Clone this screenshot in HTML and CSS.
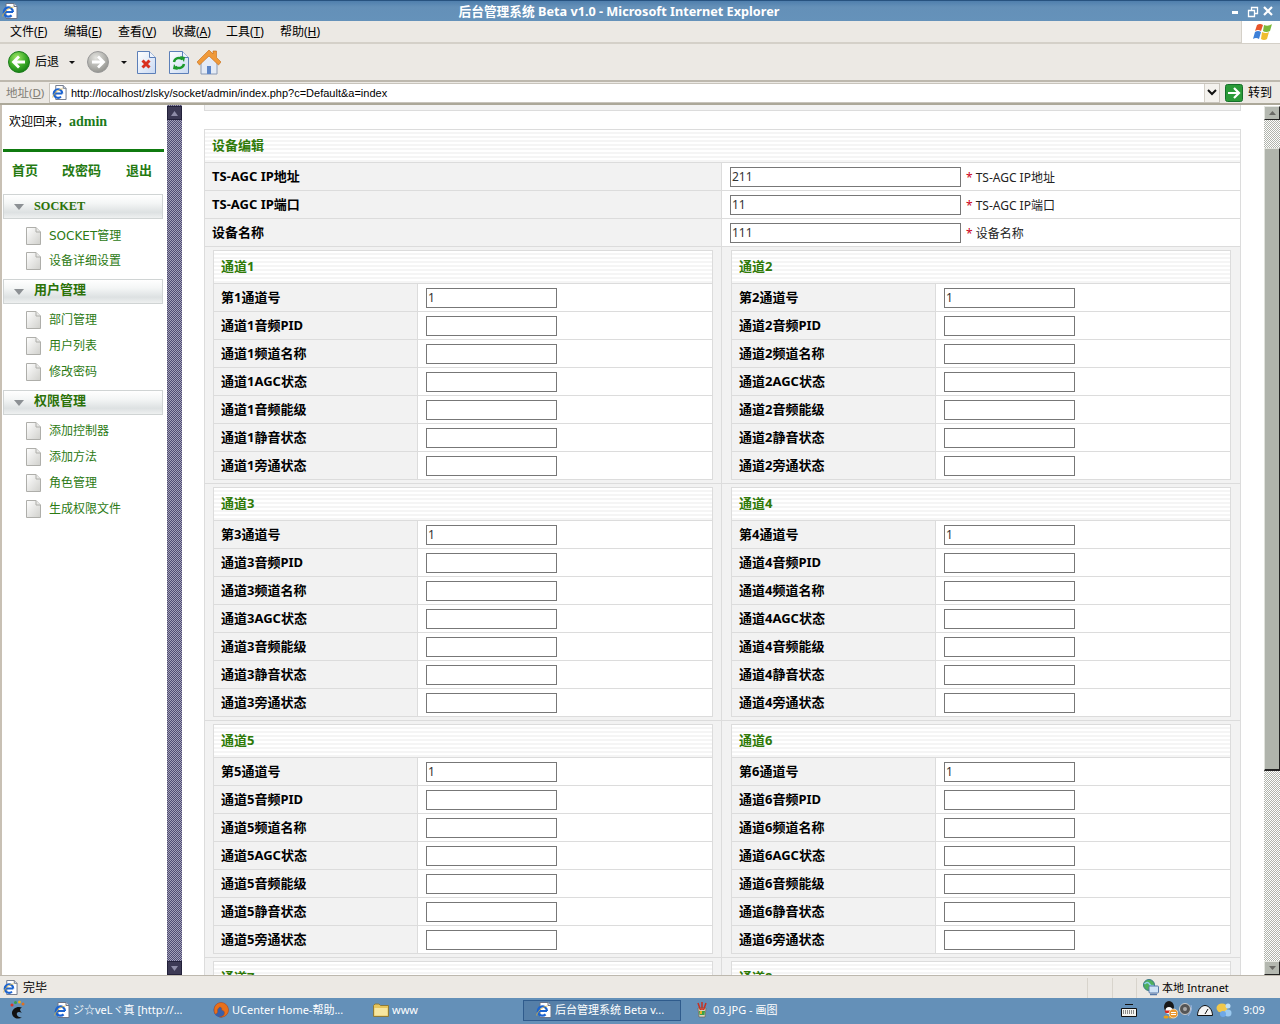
FILE: index.html
```html
<!DOCTYPE html>
<html lang="zh">
<head>
<meta charset="utf-8">
<title>后台管理系统 Beta v1.0 - Microsoft Internet Explorer</title>
<link rel="stylesheet" href="styles.css">
</head>
<body>
<svg class="defs" aria-hidden="true">
  <defs>
    <radialGradient id="gGreen" cx="40%" cy="30%" r="75%"><stop offset="0" stop-color="#a6e86a"/><stop offset=".55" stop-color="#3fae2a"/><stop offset="1" stop-color="#127a12"/></radialGradient>
    <radialGradient id="gGray" cx="40%" cy="30%" r="75%"><stop offset="0" stop-color="#e4e4e0"/><stop offset="1" stop-color="#8f8f8a"/></radialGradient>
    <linearGradient id="gPage" x1="0" y1="0" x2="1" y2="1"><stop offset="0" stop-color="#fff"/><stop offset="1" stop-color="#c9d9f2"/></linearGradient>
    <linearGradient id="gDoc" x1="0" y1="0" x2="1" y2="1"><stop offset="0" stop-color="#fff"/><stop offset="1" stop-color="#d0d0cc"/></linearGradient>
    <symbol id="ie" viewBox="0 0 16 16">
      <path d="M4 .5h8l3 3v12H4z" fill="#fff" stroke="#6b7488" stroke-width="1"/>
      <path d="M12 .5v3h3" fill="#dfe5ee" stroke="#6b7488" stroke-width="1"/>
      <path d="M2.5 9h8.5M11 9a4.6 4.6 0 1 0-1.4 3.4" fill="none" stroke="#1c64d0" stroke-width="2.2"/>
      <path d="M.8 13.5C.2 11 6 4.5 11.5 4" fill="none" stroke="#e8b93a" stroke-width=".8"/>
    </symbol>
    <symbol id="doc" viewBox="0 0 15 18">
      <path d="M.5.5h9.5l4.5 4.5v12.5H.5z" fill="url(#gDoc)" stroke="#aeaeaa"/>
      <path d="M10 .5V5h4.5" fill="#e8e8e6" stroke="#aeaeaa"/>
    </symbol>
    <symbol id="folder" viewBox="0 0 16 14">
      <path d="M.5 2.5 2 1h4l1.5 1.5h8v11H.5z" fill="#e8c65c" stroke="#8d7a3a"/>
      <path d="M1.5 5h13v7.5h-13z" fill="#f7e6a0"/>
    </symbol>
  </defs>
</svg>
<div class="window">
  <header class="titlebar">
    <svg class="title-icon"><use href="#ie"/></svg>
    <div class="title-text">后台管理系统 Beta v1.0 - Microsoft Internet Explorer</div>
    <div class="title-btns">
      <svg width="48" height="21" viewBox="0 0 48 21"><path d="M0 10h6v3H0z" fill="#fff"/><path d="M16.5 9.5h6v6h-6zM19.5 9.5v-3h6v6h-3" fill="none" stroke="#fff" stroke-width="1.3"/><path d="M32 6l8 8M40 6l-8 8" stroke="#fff" stroke-width="2.2"/></svg>
    </div>
  </header>
  <nav class="menubar">
    <div class="menus">
      <span>文件(<u>F</u>)</span><span>编辑(<u>E</u>)</span><span>查看(<u>V</u>)</span><span>收藏(<u>A</u>)</span><span>工具(<u>T</u>)</span><span>帮助(<u>H</u>)</span>
    </div>
    <div class="flag">
      <svg width="22" height="20" viewBox="0 0 22 20"><path d="M4 3q3-2 6 0l-2 6q-3-2-6 0z" fill="#e8552a"/><path d="M11 3q4 2 8-1l-2 7q-4 2-7 0z" fill="#7cb83a"/><path d="M2 10q3-2 6 0l-2 7q-3-2-6 0z" fill="#3d80d8"/><path d="M9 10q4 2 7 0l-2 7q-3 2-6 0z" fill="#f0bd2e"/></svg>
    </div>
  </nav>
  <div class="toolbar">
    <svg width="22" height="22" viewBox="0 0 22 22"><circle cx="11" cy="11" r="10.5" fill="url(#gGreen)" stroke="#1c7c1c"/><path d="M17 11H6M11 5.500 5.500 11l5.500 5.500" fill="none" stroke="#fff" stroke-width="2.800"/></svg>
    <span class="tb-label">后退</span>
    <i class="caret caret-back"></i>
    <svg class="tb-fwd" width="22" height="22" viewBox="0 0 22 22"><circle cx="11" cy="11" r="10.5" fill="url(#gGray)" stroke="#999"/><path d="M5 11h11M11 5.500l5.500 5.500-5.500 5.500" fill="none" stroke="#fff" stroke-width="2.800"/></svg>
    <i class="caret caret-fwd"></i>
    <svg class="tb-stop" width="19" height="23" viewBox="0 0 19 23"><path d="M.5.5h12l6 6v16H.5z" fill="url(#gPage)" stroke="#5c7fb8"/><path d="M12.5.5v6h6" fill="#eef3fb" stroke="#5c7fb8"/><path d="M5.500 9.500l7 7M12.500 9.500l-7 7" stroke="#d9301f" stroke-width="3"/></svg>
    <svg class="tb-refresh" width="20" height="23" viewBox="0 0 20 23"><path d="M.5.5h13l6 6v16H.5z" fill="url(#gPage)" stroke="#5c7fb8"/><path d="M13.5.5v6h6" fill="#eef3fb" stroke="#5c7fb8"/><path d="M5 11a5 5 0 0 1 8.500-2.500" fill="none" stroke="#1c9a2c" stroke-width="2.400"/><path d="M11 5l5 1-1 5z" fill="#1c9a2c"/><path d="M15 13a5 5 0 0 1-8.500 2.500" fill="none" stroke="#1c9a2c" stroke-width="2.400"/><path d="M9 19l-5-1 1-5z" fill="#1c9a2c"/></svg>
    <svg class="tb-home" width="24" height="25" viewBox="0 0 24 25"><path d="M4 11 12 4l8 7v13H4z" fill="#e4ebf6" stroke="#8a9ab5"/><path d="M10 16h4v8h-4z" fill="#5d86c8"/><path d="M0 12 12 0l4 4V1h3.500v6.500L24 12l-2.500 3L12 6 2.500 15z" fill="#f09a3a" stroke="#c56a16" stroke-width=".6"/></svg>
  </div>
  <div class="addressbar">
    <span class="addr-label">地址(<u>D</u>)</span>
    <div class="addr-field">
      <svg class="addr-icon"><use href="#ie"/></svg>
      <span class="addr-url">http://localhost/zlsky/socket/admin/index.php?c=Default&amp;a=index</span>
      <div class="addr-drop"><svg width="10" height="7" viewBox="0 0 10 7"><path d="M1 1l4 4 4-4" fill="none" stroke="#111" stroke-width="2"/></svg></div>
    </div>
    <svg class="go-icon" width="18" height="18" viewBox="0 0 18 18"><rect x=".5" y=".5" width="17" height="17" rx="2" fill="#2a9a38" stroke="#14702a"/><path d="M3 9h10M9 4l5 5-5 5" fill="none" stroke="#fff" stroke-width="2.2"/></svg>
    <span class="go-label">转到</span>
  </div>

  <div class="content">
    <aside class="sidebar">
      <div class="welcome">欢迎回来，<b>admin</b></div>
      <div class="greenbar"></div>
      <div class="quicknav"><a>首页</a><a>改密码</a><a>退出</a></div>
      <div class="sec-head"><i class="tri"></i><span class="sec-serif">SOCKET</span></div>
      <ul class="links links-first">
        <li><svg class="li-doc"><use href="#doc"/></svg>SOCKET管理</li>
        <li><svg class="li-doc"><use href="#doc"/></svg>设备详细设置</li>
      </ul>
      <div class="sec-head"><i class="tri"></i><span>用户管理</span></div>
      <ul class="links">
        <li><svg class="li-doc"><use href="#doc"/></svg>部门管理</li>
        <li><svg class="li-doc"><use href="#doc"/></svg>用户列表</li>
        <li><svg class="li-doc"><use href="#doc"/></svg>修改密码</li>
      </ul>
      <div class="sec-head"><i class="tri"></i><span>权限管理</span></div>
      <ul class="links">
        <li><svg class="li-doc"><use href="#doc"/></svg>添加控制器</li>
        <li><svg class="li-doc"><use href="#doc"/></svg>添加方法</li>
        <li><svg class="li-doc"><use href="#doc"/></svg>角色管理</li>
        <li><svg class="li-doc"><use href="#doc"/></svg>生成权限文件</li>
      </ul>
    </aside>
    <div class="splitter">
      <div class="split-btn"><svg width="7" height="5" viewBox="0 0 7 5"><path d="M0 5h7L3.500 0z" fill="#8f8da8"/></svg></div>
      <div class="split-btn"><svg width="7" height="5" viewBox="0 0 7 5"><path d="M0 0h7L3.500 5z" fill="#8f8da8"/></svg></div>
    </div>
    <main class="main">
      <div class="strip"></div>
      <section class="form">
        <h2 class="head">设备编辑</h2>
        <div class="frow"><div class="flabel">TS-AGC IP地址</div><div class="fval"><input class="in-wide" type="text" value="211"><span class="star">*</span><span class="hint">TS-AGC IP地址</span></div></div>
        <div class="frow"><div class="flabel">TS-AGC IP端口</div><div class="fval"><input class="in-wide" type="text" value="11"><span class="star">*</span><span class="hint">TS-AGC IP端口</span></div></div>
        <div class="frow"><div class="flabel">设备名称</div><div class="fval"><input class="in-wide" type="text" value="111"><span class="star">*</span><span class="hint">设备名称</span></div></div>

        <div class="pair">
          <div class="pcell">
            <div class="chan"><h3 class="head">通道1</h3>
              <div class="crow"><div class="clabel">第1通道号</div><div class="cval"><input type="text" value="1"></div></div>
              <div class="crow"><div class="clabel">通道1音频PID</div><div class="cval"><input type="text"></div></div>
              <div class="crow"><div class="clabel">通道1频道名称</div><div class="cval"><input type="text"></div></div>
              <div class="crow"><div class="clabel">通道1AGC状态</div><div class="cval"><input type="text"></div></div>
              <div class="crow"><div class="clabel">通道1音频能级</div><div class="cval"><input type="text"></div></div>
              <div class="crow"><div class="clabel">通道1静音状态</div><div class="cval"><input type="text"></div></div>
              <div class="crow"><div class="clabel">通道1旁通状态</div><div class="cval"><input type="text"></div></div>
            </div>
          </div>
          <div class="pcell pcell-r">
            <div class="chan"><h3 class="head">通道2</h3>
              <div class="crow"><div class="clabel">第2通道号</div><div class="cval"><input type="text" value="1"></div></div>
              <div class="crow"><div class="clabel">通道2音频PID</div><div class="cval"><input type="text"></div></div>
              <div class="crow"><div class="clabel">通道2频道名称</div><div class="cval"><input type="text"></div></div>
              <div class="crow"><div class="clabel">通道2AGC状态</div><div class="cval"><input type="text"></div></div>
              <div class="crow"><div class="clabel">通道2音频能级</div><div class="cval"><input type="text"></div></div>
              <div class="crow"><div class="clabel">通道2静音状态</div><div class="cval"><input type="text"></div></div>
              <div class="crow"><div class="clabel">通道2旁通状态</div><div class="cval"><input type="text"></div></div>
            </div>
          </div>
        </div>

        <div class="pair">
          <div class="pcell">
            <div class="chan"><h3 class="head">通道3</h3>
              <div class="crow"><div class="clabel">第3通道号</div><div class="cval"><input type="text" value="1"></div></div>
              <div class="crow"><div class="clabel">通道3音频PID</div><div class="cval"><input type="text"></div></div>
              <div class="crow"><div class="clabel">通道3频道名称</div><div class="cval"><input type="text"></div></div>
              <div class="crow"><div class="clabel">通道3AGC状态</div><div class="cval"><input type="text"></div></div>
              <div class="crow"><div class="clabel">通道3音频能级</div><div class="cval"><input type="text"></div></div>
              <div class="crow"><div class="clabel">通道3静音状态</div><div class="cval"><input type="text"></div></div>
              <div class="crow"><div class="clabel">通道3旁通状态</div><div class="cval"><input type="text"></div></div>
            </div>
          </div>
          <div class="pcell pcell-r">
            <div class="chan"><h3 class="head">通道4</h3>
              <div class="crow"><div class="clabel">第4通道号</div><div class="cval"><input type="text" value="1"></div></div>
              <div class="crow"><div class="clabel">通道4音频PID</div><div class="cval"><input type="text"></div></div>
              <div class="crow"><div class="clabel">通道4频道名称</div><div class="cval"><input type="text"></div></div>
              <div class="crow"><div class="clabel">通道4AGC状态</div><div class="cval"><input type="text"></div></div>
              <div class="crow"><div class="clabel">通道4音频能级</div><div class="cval"><input type="text"></div></div>
              <div class="crow"><div class="clabel">通道4静音状态</div><div class="cval"><input type="text"></div></div>
              <div class="crow"><div class="clabel">通道4旁通状态</div><div class="cval"><input type="text"></div></div>
            </div>
          </div>
        </div>

        <div class="pair">
          <div class="pcell">
            <div class="chan"><h3 class="head">通道5</h3>
              <div class="crow"><div class="clabel">第5通道号</div><div class="cval"><input type="text" value="1"></div></div>
              <div class="crow"><div class="clabel">通道5音频PID</div><div class="cval"><input type="text"></div></div>
              <div class="crow"><div class="clabel">通道5频道名称</div><div class="cval"><input type="text"></div></div>
              <div class="crow"><div class="clabel">通道5AGC状态</div><div class="cval"><input type="text"></div></div>
              <div class="crow"><div class="clabel">通道5音频能级</div><div class="cval"><input type="text"></div></div>
              <div class="crow"><div class="clabel">通道5静音状态</div><div class="cval"><input type="text"></div></div>
              <div class="crow"><div class="clabel">通道5旁通状态</div><div class="cval"><input type="text"></div></div>
            </div>
          </div>
          <div class="pcell pcell-r">
            <div class="chan"><h3 class="head">通道6</h3>
              <div class="crow"><div class="clabel">第6通道号</div><div class="cval"><input type="text" value="1"></div></div>
              <div class="crow"><div class="clabel">通道6音频PID</div><div class="cval"><input type="text"></div></div>
              <div class="crow"><div class="clabel">通道6频道名称</div><div class="cval"><input type="text"></div></div>
              <div class="crow"><div class="clabel">通道6AGC状态</div><div class="cval"><input type="text"></div></div>
              <div class="crow"><div class="clabel">通道6音频能级</div><div class="cval"><input type="text"></div></div>
              <div class="crow"><div class="clabel">通道6静音状态</div><div class="cval"><input type="text"></div></div>
              <div class="crow"><div class="clabel">通道6旁通状态</div><div class="cval"><input type="text"></div></div>
            </div>
          </div>
        </div>

        <div class="pair">
          <div class="pcell"><div class="chan"><h3 class="head">通道7</h3></div></div>
          <div class="pcell pcell-r"><div class="chan"><h3 class="head">通道8</h3></div></div>
        </div>
      </section>
    </main>
    <div class="scrollbar">
      <div class="sb-btn"><svg width="7" height="4" viewBox="0 0 7 4"><path d="M0 4h7L3.500 0z" fill="#6a6a66"/></svg></div>
      <div class="sb-track sb-track-top"></div>
      <div class="sb-thumb"></div>
      <div class="sb-track sb-track-bottom"></div>
      <div class="sb-btn"><svg width="7" height="4" viewBox="0 0 7 4"><path d="M0 0h7L3.500 4z" fill="#6a6a66"/></svg></div>
    </div>
  </div>

  <footer class="statusbar">
    <svg class="st-icon"><use href="#ie"/></svg>
    <span class="st-text">完毕</span>
    <span class="st-sep st-sep-a"></span>
    <span class="st-sep st-sep-b"></span>
    <span class="st-sep st-sep-c"></span>
    <svg class="st-net" width="16" height="17" viewBox="0 0 16 17"><circle cx="6" cy="6" r="5.5" fill="#4fb05a" stroke="#3a7a88"/><path d="M1.500 5q3-3 5 0t4 1" fill="none" stroke="#8fd0f0" stroke-width="1.5"/><rect x="6" y="7" width="9.5" height="7" rx="1" fill="#cfe3f7" stroke="#5679a8"/><path d="M7 15.500h7" stroke="#5679a8" stroke-width="1.5"/></svg>
    <span class="st-zone">本地 Intranet</span>
  </footer>
  <div class="taskbar">
    <svg class="start" width="16" height="20" viewBox="0 0 16 20"><circle cx="3" cy="5" r="1.5" fill="#e0342a"/><circle cx="6.5" cy="2.5" r="1.5" fill="#3aa04a"/><circle cx="10.5" cy="2" r="1.5" fill="#e8b020"/><circle cx="14" cy="4" r="1.5" fill="#e07020"/><path d="M13 7.500C8 5.500 2.500 9 3 13.500 3.500 18 9 20 13 17.500 9.500 17.500 7 15 8 13c1-1.500 3-1 5 0-2-2-3-4 0-5.500z" fill="#111"/></svg>
    <div class="task task-1"><svg class="task-icon"><use href="#ie"/></svg>ジ☆veLヾ真 [http://...</div>
    <div class="task task-2"><svg class="task-icon" viewBox="0 0 16 16"><circle cx="8" cy="8" r="7.5" fill="#3a5fa8"/><path d="M2 12C-1 5 4 .5 8 .5c4 0 7 3 7.500 7 .5 5-5 8.500-9 7.500 3 0 5-2 5-4 0-2-2-3-3-3 1-2-1-3-2-3 0 1-2 1.500-2 3 0 2 .5 3-2 4z" fill="#e8701a" stroke="#b8400c" stroke-width=".4"/></svg>UCenter Home-帮助...</div>
    <div class="task task-3"><svg class="task-icon"><use href="#folder"/></svg>www</div>
    <div class="task task-4 task-active"><svg class="task-icon"><use href="#ie"/></svg>后台管理系统 Beta v...</div>
    <div class="task task-5"><svg class="task-icon" viewBox="0 0 16 16"><path d="M4 6h8l-1 9H5z" fill="#d8d0c0" stroke="#6a5a40" stroke-width=".6"/><path d="M4 1l2.500 7M8 0v8M12 1 9.500 8" stroke="#c83020" stroke-width="1.5"/><path d="M5 9h6l-.5 4h-5z" fill="#3aa048"/><path d="M6 9h2v3H6z" fill="#e8b020"/></svg>03.JPG - 画图</div>
    <div class="tray">
      <svg width="16" height="13" viewBox="0 0 16 13"><path d="M4 .5h8M.5 4.500h15v8H.5z" fill="#f4f4f0" stroke="#111"/><path d="M2 7h12M2 9h12" stroke="#222" stroke-dasharray="1 1"/></svg>
      <svg class="tr-qq" width="16" height="18" viewBox="0 0 16 18"><ellipse cx="7" cy="6" rx="5" ry="6" fill="#181818"/><ellipse cx="7" cy="9.5" rx="3.5" ry="3.5" fill="#fff"/><path d="M2.500 9.500h9l-1 2.500h-7z" fill="#d8281c"/><ellipse cx="4" cy="16" rx="2.5" ry="1.5" fill="#e8a018"/><ellipse cx="9" cy="16" rx="2.5" ry="1.5" fill="#e8a018"/><circle cx="11.5" cy="12.5" r="4.5" fill="#e89830" stroke="#fff" stroke-width=".6"/><path d="M9 11.500h5M9 13.500h5" stroke="#fff"/></svg>
      <svg class="tr-spk" width="14" height="16" viewBox="0 0 14 16"><circle cx="6" cy="7" r="5.5" fill="#555" stroke="#ccc"/><circle cx="6" cy="7" r="2" fill="#aaa"/><path d="M12 3q2 5-3 11" fill="none" stroke="#9bb6e0"/></svg>
      <svg class="tr-cloud" width="16" height="11" viewBox="0 0 16 11"><path d="M.5 10.500C.5 4 5 .5 8 .5s7.500 3.500 7.500 10z" fill="#f4f4f4" stroke="#111"/><path d="M8 9 11 4" stroke="#111"/></svg>
      <svg class="tr-msg" width="16" height="16" viewBox="0 0 16 16"><ellipse cx="6" cy="6" rx="5.5" ry="4.5" fill="#f2c84a"/><circle cx="12" cy="11" r="3.5" fill="#9ccaf0"/><circle cx="7" cy="12" r="3" fill="#6ea8e8"/><circle cx="12" cy="4" r="2.5" fill="#bfe0f8"/></svg>
      <span class="clock">9:09</span>
    </div>
  </div>
</div>
</body>
</html>
```

FILE: styles.css
```css
* { box-sizing: border-box; }
html, body { margin: 0; padding: 0; height: 100%; overflow: hidden; }
body { font: 12px/16px "Noto Sans", "Noto Sans CJK SC", sans-serif; color: #000; background: #ece9e4; }
.defs { position: absolute; width: 0; height: 0; }
svg { display: block; flex: none; }
u { text-decoration: underline; }

.window { display: flex; flex-direction: column; width: 1280px; height: 1024px; }

/* Title bar */
.titlebar { height: 21px; flex: none; display: flex; align-items: center; padding-left: 2px; background: linear-gradient(#4f7fad, #6490b8 30%, #6592ba); border-top: 1px solid #27527f; }
.title-icon { width: 16px; height: 16px; }
.title-text { flex: 1; text-align: center; padding-right: 12px; color: #fff; font-weight: 700; font-size: 12.7px; white-space: nowrap; }
.title-btns { width: 48px; }

/* Menu */
.menubar { height: 23px; flex: none; display: flex; background: #ece9e4; border-bottom: 2px solid #d4d0c8; }
.menus { flex: 1; display: flex; padding-left: 10px; gap: 16px; line-height: 21px; }
.menus span { width: 38px; white-space: nowrap; }
.flag { width: 39px; height: 22px; background: #fff; border-left: 1px solid #d4d0c8; padding: 1px 0 0 11px; }

/* Toolbar */
.toolbar { height: 38px; flex: none; display: flex; align-items: center; background: #ece9e4; border-bottom: 2px solid #bdb8ae; padding-left: 8px; }
.tb-label { margin-left: 5px; width: 24px; }
.caret { width: 0; height: 0; border: 3px solid transparent; border-top: 3px solid #111; border-bottom: 0; flex: none; }
.caret-back { margin-left: 10px; }
.tb-fwd { margin-left: 12px; }
.caret-fwd { margin-left: 12px; }
.tb-stop { margin-left: 10px; }
.tb-refresh { margin-left: 13px; }
.tb-home { margin-left: 8px; }

/* Address */
.addressbar { height: 23px; flex: none; display: flex; align-items: center; background: #ece9e4; border-bottom: 2px solid #aca899; padding-left: 6px; }
.addr-label { width: 43px; color: #807c74; font-size: 11.5px; padding-top: 1px; }
.addr-field { width: 1171px; height: 20px; display: flex; align-items: center; background: #fff; border: 1px solid #c8c4bc; padding-left: 2px; }
.addr-icon { width: 15px; height: 15px; }
.addr-url { flex: 1; margin-left: 4px; padding-top: 1px; font: 11px/16px "Liberation Sans", sans-serif; }
.addr-drop { width: 15px; height: 18px; display: flex; align-items: center; justify-content: center; border-left: 1px solid #d4d0c8; background: #f4f2ee; }
.go-icon { margin-left: 5px; }
.go-label { margin-left: 5px; }

/* Content */
.content { flex: 1; min-height: 0; display: flex; background: #fff; overflow: hidden; }
.sidebar { width: 167px; flex: none; border-left: 2px solid #c8c0b4; background: #fff; }
.welcome { height: 44px; padding: 7px 0 0 7px; line-height: 20px; }
.welcome b { font: 700 14px/20px "Liberation Serif", serif; color: #1c7a1c; }
.greenbar { height: 3px; margin: 0 3px 0 1px; background: #0f7a0f; }
.quicknav { height: 42px; display: flex; gap: 24px; padding: 8px 0 0 10px; }
.quicknav a { font-weight: 700; font-size: 13px; line-height: 20px; color: #257a12; }
.quicknav a:last-child { margin-left: 1px; }
.sec-head { width: 160px; height: 25px; margin-left: 1px; display: flex; align-items: center; border: 1px solid #d0d4d4; background: linear-gradient(#fff, #f4f6f6 35%, #dde1e2 75%, #eef0f0); padding-left: 10px; }
.tri { width: 0; height: 0; border: 5px solid transparent; border-top: 6px solid #8c9094; border-bottom: 0; margin-right: 10px; }
.sec-head span { padding-bottom: 6px; font-weight: 700; font-size: 13px; color: #2c7208; }
.sec-head .sec-serif { padding-bottom: 2px; font-family: "Liberation Serif", serif; font-size: 12.3px; }
.links { list-style: none; margin: 0 0 5px; padding: 3px 0 0; }
.links-first { margin-bottom: 6px; padding-top: 4px; }
.links li { height: 26px; display: flex; align-items: center; padding-left: 24px; color: #2c7a14; font-family: "DejaVu Sans", "Noto Sans CJK SC", sans-serif; }
.links-first li { height: 25px; }
.li-doc { width: 15px; height: 18px; margin-right: 8px; }

.splitter { width: 15px; flex: none; display: flex; flex-direction: column; justify-content: space-between; padding: 1px 0 0; background: repeating-conic-gradient(#4e4b72 0 25%, #a3a1b8 0 50%) 0 0 / 2px 2px; }
.split-btn { height: 14px; display: flex; align-items: center; justify-content: center; background: #3d3a55; border: 1px solid #23213a; }

.main { width: 1082px; flex: none; overflow: hidden; padding-left: 22px; background: #fff; }
.strip { width: 1037px; height: 6px; background: #f3f3f3; border: 1px solid #dcdcdc; border-top: 0; margin-bottom: 18px; }
.form { width: 1037px; border: 1px solid #dcdcdc; border-bottom: 0; }
.head { margin: 0; height: 33px; padding-left: 7px; font-size: 13px; font-weight: 700; line-height: 31px; color: #2f7a08; background: repeating-linear-gradient(#fff 0 2px, #f5f5f5 2px 4px); border-bottom: 1px solid #dcdcdc; }
.frow { height: 28px; display: flex; border-bottom: 1px solid #dcdcdc; }
.flabel { width: 517px; flex: none; padding-left: 7px; font-size: 13px; font-weight: 700; line-height: 27px; background: #f2f2f2; border-right: 1px solid #dcdcdc; }
.fval { flex: 1; display: flex; align-items: flex-start; padding: 4px 0 0 8px; }
input { display: block; height: 20px; width: 131px; padding: 0 1px 2px; border: 1px solid #777; border-radius: 0; background: #fff; color: #333; font: 12px "Noto Sans", sans-serif; outline: 0; }
input.in-wide { width: 231px; }
.star { margin-left: 5px; color: #cc0018; line-height: 22px; }
.hint { margin-left: 3px; line-height: 22px; color: #222; }

.pair { display: flex; height: 237px; background: #f2f2f2; border-bottom: 1px solid #dcdcdc; }
.pcell { width: 517px; flex: none; padding: 3px 8px; border-right: 1px solid #dcdcdc; }
.pcell-r { width: 518px; padding: 3px 9px; border-right: 0; }
.chan { width: 500px; height: 230px; background: #fff; border: 1px solid #dcdcdc; border-bottom: 0; }
.crow { height: 28px; display: flex; border-bottom: 1px solid #dcdcdc; }
.clabel { width: 204px; flex: none; padding-left: 7px; font-size: 13px; font-weight: 700; line-height: 27px; background: #f2f2f2; border-right: 1px solid #dcdcdc; }
.cval { flex: 1; padding: 4px 0 0 8px; }

/* Scrollbar */
.scrollbar { width: 16px; flex: none; display: flex; flex-direction: column; padding-top: 1px; }
.sb-btn { height: 14px; display: flex; align-items: center; justify-content: center; background: #b4b8b0; border: 1px solid #e4e6e0; border-right-color: #222; border-bottom-color: #222; }
.sb-track { background: repeating-conic-gradient(#fff 0 25%, #b0b4ac 0 50%) 0 0 / 2px 2px; }
.sb-track-top { height: 28px; }
.sb-thumb { height: 623px; background: #b0b4ac; border: 1px solid #e0e2dc; border-right-color: #222; border-bottom: 2px solid #222; }
.sb-track-bottom { flex: 1; }

/* Status */
.statusbar { height: 23px; flex: none; display: flex; align-items: center; padding: 1px 0 0 3px; background: #ece9e4; border-top: 1px solid #bdb8ae; }
.st-icon { width: 15px; height: 15px; }
.st-text { margin-left: 5px; }
.st-sep { width: 1px; height: 20px; background: #d8d4cc; flex: none; }
.st-sep-a { margin-left: 1040px; }
.st-sep-b { margin-left: 24px; }
.st-sep-c { margin-left: 23px; }
.st-net { margin-left: 6px; }
.st-zone { margin-left: 3px; font-size: 11px; }

/* Taskbar */
.taskbar { height: 26px; flex: none; display: flex; align-items: center; padding: 0 0 2px 9px; background: #6490b8; color: #fff; font-size: 11px; }
.task { display: flex; align-items: center; white-space: nowrap; height: 21px; }
.task-icon { width: 16px; height: 16px; margin-right: 3px; }
.task-1 { margin-left: 29px; width: 159px; }
.task-2 { width: 160px; }
.task-3 { width: 150px; }
.task-4 { width: 158px; padding-left: 12px; }
.task-active { background: #557fa8; border: 1px solid #2f5b8c; }
.task-5 { margin-left: 13px; width: 150px; }
.tray { flex: 1; display: flex; align-items: center; padding-left: 277px; }
.tr-qq { margin-left: 25px; }
.tr-spk { margin-left: 1px; }
.tr-cloud { margin-left: 4px; }
.tr-msg { margin-left: 3px; }
.clock { margin-left: 11px; }
```
